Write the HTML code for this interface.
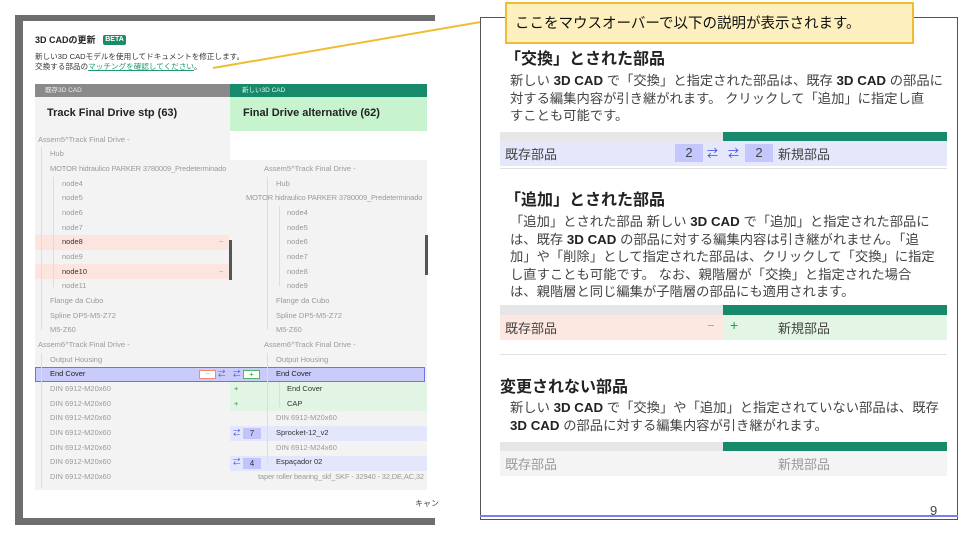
<!DOCTYPE html>
<html><head><meta charset="utf-8"><style>
*{margin:0;padding:0;box-sizing:border-box}
body{width:960px;height:540px;background:#fff;position:relative;overflow:hidden;font-family:"Liberation Sans","Noto Sans CJK JP",sans-serif;color:#222}
.a{position:absolute}
.row{position:absolute;height:14.7px;font-size:7.5px;color:#9a9a9a;line-height:14.7px;white-space:nowrap}
.h{font-size:16px;font-weight:bold;color:#222}
.p{font-size:13.3px;color:#444;line-height:17.6px}
.p b{color:#222}
.lbl{position:absolute;font-size:13px;color:#444}
.clip{position:absolute;overflow:hidden}
</style></head><body>
<div class="a" style="left:15px;top:15px;width:420px;height:510px;background:#6e6e6e"></div>
<div class="a" style="left:23px;top:21px;width:412px;height:497px;background:#fff"></div>
<div class="a" style="left:35px;top:33px;font-size:9px;font-weight:bold;color:#222">3D CADの更新</div>
<div class="a" style="left:103px;top:35px;width:23px;height:10px;background:#1f8a66;border-radius:2px;color:#fff;font-size:7px;font-weight:bold;text-align:center;line-height:10px">BETA</div>
<div class="a" style="left:35px;top:52px;font-size:7.6px;color:#333;line-height:10px;white-space:nowrap">新しい3D CADモデルを使用してドキュメントを修正します。<br>交換する部品の<span style="color:#1f9a70;text-decoration:underline">マッチングを確認してください</span>。</div>
<div class="a" style="left:35px;top:84px;width:195px;height:13px;background:#8a8a8a;color:#eee;font-size:6.5px;line-height:13px;padding-left:10px">既存3D CAD</div>
<div class="a" style="left:230px;top:84px;width:197px;height:13px;background:#168a6a;color:#e8f5ef;font-size:6.5px;line-height:13px;padding-left:12px">新しい3D CAD</div>
<div class="a" style="left:35px;top:97px;width:195px;height:393px;background:#f3f3f3"></div>
<div class="a" style="left:230px;top:97px;width:197px;height:34px;background:#c8f3cf"></div>
<div class="a" style="left:230px;top:160px;width:197px;height:330px;background:#f3f3f3"></div>
<div class="a" style="left:47px;top:107px;font-size:11px;font-weight:bold;color:#222">Track Final Drive stp (63)</div>
<div class="a" style="left:243px;top:107px;font-size:11px;font-weight:bold;color:#222">Final Drive alternative (62)</div>
<div class="a" style="left:35px;top:235px;width:194px;height:14.7px;background:#fde5df"></div>
<div class="a" style="left:35px;top:264px;width:194px;height:14.7px;background:#fde5df"></div>
<div class="a" style="left:35px;top:367px;width:390px;height:15px;background:#c9ccfb;border:1px solid #6f72ea"></div>
<div class="a" style="left:230px;top:382px;width:197px;height:29px;background:#e2f5e4"></div>
<div class="a" style="left:230px;top:426px;width:197px;height:14.7px;background:#e4e6fb"></div>
<div class="a" style="left:230px;top:456px;width:197px;height:14.7px;background:#e4e6fb"></div>
<div class="a" style="left:41px;top:147px;width:1px;height:183px;background:#ddd"></div>
<div class="a" style="left:53px;top:177px;width:1px;height:110px;background:#ddd"></div>
<div class="a" style="left:41px;top:353px;width:1px;height:135px;background:#ddd"></div>
<div class="a" style="left:267px;top:177px;width:1px;height:153px;background:#ddd"></div>
<div class="a" style="left:279px;top:206px;width:1px;height:80px;background:#ddd"></div>
<div class="a" style="left:267px;top:353px;width:1px;height:110px;background:#ddd"></div>
<div class="a" style="left:279px;top:382px;width:1px;height:25px;background:#ddd"></div>
<div class="clip" style="left:35px;top:97px;width:194px;height:393px">
<div style="position:relative;left:-35px;top:-97px">
<div class="row" style="left:38px;top:133px">Assem5^Track Final Drive -</div>
<div class="row" style="left:50px;top:147px">Hub</div>
<div class="row" style="left:50px;top:162px;letter-spacing:-0.15px">MOTOR hidraulico PARKER 3780009_Predeterminado</div>
<div class="row" style="left:62px;top:177px">node4</div>
<div class="row" style="left:62px;top:191px">node5</div>
<div class="row" style="left:62px;top:206px">node6</div>
<div class="row" style="left:62px;top:221px">node7</div>
<div class="row" style="left:62px;top:235px;color:#333">node8</div>
<div class="row" style="left:62px;top:250px">node9</div>
<div class="row" style="left:62px;top:265px;color:#333">node10</div>
<div class="row" style="left:62px;top:279px">node11</div>
<div class="row" style="left:50px;top:294px">Flange da Cubo</div>
<div class="row" style="left:50px;top:309px">Spline DP5-M5-Z72</div>
<div class="row" style="left:50px;top:323px">M5-Z60</div>
<div class="row" style="left:38px;top:338px">Assem6^Track Final Drive -</div>
<div class="row" style="left:50px;top:353px">Output Housing</div>
<div class="row" style="left:50px;top:367px;color:#222">End Cover</div>
<div class="row" style="left:50px;top:382px">DIN 6912-M20x60</div>
<div class="row" style="left:50px;top:397px">DIN 6912-M20x60</div>
<div class="row" style="left:50px;top:411px">DIN 6912-M20x60</div>
<div class="row" style="left:50px;top:426px">DIN 6912-M20x60</div>
<div class="row" style="left:50px;top:441px">DIN 6912-M20x60</div>
<div class="row" style="left:50px;top:455px">DIN 6912-M20x60</div>
<div class="row" style="left:50px;top:470px">DIN 6912-M20x60</div>
<div class="row" style="left:219px;top:235px;color:#f08a70">−</div>
<div class="row" style="left:219px;top:265px;color:#f08a70">−</div>
</div></div>
<div class="a" style="left:229px;top:240px;width:3px;height:40px;background:#555"></div>
<div class="a" style="left:425px;top:235px;width:3px;height:40px;background:#555"></div>
<div class="a" style="left:199px;top:370px;width:17px;height:9px;background:#fff;border:1px solid #f08a70;color:#f08a70;font-size:7px;line-height:7px;text-align:center">−</div>
<div class="row" style="left:218px;top:367px;color:#3b4be8">⇄</div>
<div class="clip" style="left:230px;top:97px;width:195px;height:393px">
<div style="position:relative;left:-230px;top:-97px">
<div class="row" style="left:264px;top:162px">Assem5^Track Final Drive -</div>
<div class="row" style="left:276px;top:177px">Hub</div>
<div class="row" style="left:246px;top:191px;letter-spacing:-0.15px">MOTOR hidraulico PARKER 3780009_Predeterminado</div>
<div class="row" style="left:287px;top:206px">node4</div>
<div class="row" style="left:287px;top:221px">node5</div>
<div class="row" style="left:287px;top:235px">node6</div>
<div class="row" style="left:287px;top:250px">node7</div>
<div class="row" style="left:287px;top:265px">node8</div>
<div class="row" style="left:287px;top:279px">node9</div>
<div class="row" style="left:276px;top:294px">Flange da Cubo</div>
<div class="row" style="left:276px;top:309px">Spline DP5-M5-Z72</div>
<div class="row" style="left:276px;top:323px">M5-Z60</div>
<div class="row" style="left:264px;top:338px">Assem6^Track Final Drive -</div>
<div class="row" style="left:276px;top:353px">Output Housing</div>
<div class="row" style="left:276px;top:367px;color:#222">End Cover</div>
<div class="row" style="left:234px;top:382px;color:#2a9a3f">+</div>
<div class="row" style="left:287px;top:382px;color:#333">End Cover</div>
<div class="row" style="left:234px;top:397px;color:#2a9a3f">+</div>
<div class="row" style="left:287px;top:397px;color:#333">CAP</div>
<div class="row" style="left:276px;top:411px">DIN 6912-M20x60</div>
<div class="row" style="left:233px;top:426px;color:#3b4be8">⇄</div>
<div class="a" style="left:243px;top:428px;width:18px;height:11px;background:#c0c4fa;color:#333;font-size:8px;line-height:11px;text-align:center">7</div>
<div class="row" style="left:276px;top:426px;color:#333">Sprocket-12_v2</div>
<div class="row" style="left:276px;top:441px">DIN 6912-M24x60</div>
<div class="row" style="left:233px;top:455px;color:#3b4be8">⇄</div>
<div class="a" style="left:243px;top:458px;width:18px;height:11px;background:#c0c4fa;color:#333;font-size:8px;line-height:11px;text-align:center">4</div>
<div class="row" style="left:276px;top:455px;color:#333">Espaçador 02</div>
<div class="row" style="left:258px;top:470px;letter-spacing:-0.15px">taper roller bearing_skf_SKF - 32940 - 32,DE,AC,32</div>
</div></div>
<div class="row" style="left:233px;top:367px;color:#3b4be8">⇄</div>
<div class="a" style="left:243px;top:370px;width:17px;height:9px;background:#fff;border:1px solid #4cb560;color:#2a9a3f;font-size:8px;line-height:7px;text-align:center">+</div>
<div class="a" style="left:23px;top:490px;width:412px;height:28px;background:#fff"></div>
<div class="a" style="left:415px;top:498px;font-size:8px;color:#444">キャン</div>
<svg class="a" style="left:0;top:0" width="960" height="540"><line x1="213" y1="68" x2="510" y2="17" stroke="#f0bc30" stroke-width="2"/></svg>
<div class="a" style="left:480px;top:17px;width:478px;height:503px;border:1px solid #555;background:#fff"></div>
<div class="a" style="left:480px;top:515px;width:478px;height:2px;background:#7a7ef0"></div>
<div class="a" style="left:505px;top:2px;width:409px;height:42px;background:#fdefbe;border:2px solid #f0bc30;font-size:14.5px;color:#111;padding:8px 0 0 8px">ここをマウスオーバーで以下の説明が表示されます。</div>
<div class="a h" style="left:505px;top:45px">「交換」とされた部品</div>
<div class="a p" style="left:510px;top:72px">新しい <b>3D CAD</b> で「交換」と指定された部品は、既存 <b>3D CAD</b> の部品に<br>対する編集内容が引き継がれます。 クリックして「追加」に指定し直<br>すことも可能です。</div>
<div class="a" style="left:500px;top:132px;width:223px;height:9px;background:#e6e6e6"></div>
<div class="a" style="left:723px;top:132px;width:224px;height:9px;background:#168a6a"></div>
<div class="a" style="left:500px;top:141px;width:447px;height:25px;background:#e5e7fb"></div>
<div class="lbl" style="left:505px;top:144px">既存部品</div>
<div class="a" style="left:675px;top:144px;width:28px;height:18px;background:#c4c7fb;text-align:center;font-size:13px;color:#444;line-height:18px">2</div>
<div class="a" style="left:707px;top:145px;font-size:11px;color:#3b4be8">⇄</div>
<div class="a" style="left:728px;top:145px;font-size:11px;color:#3b4be8">⇄</div>
<div class="a" style="left:745px;top:144px;width:28px;height:18px;background:#c4c7fb;text-align:center;font-size:13px;color:#444;line-height:18px">2</div>
<div class="lbl" style="left:778px;top:144px">新規部品</div>
<div class="a" style="left:500px;top:168px;width:447px;height:1px;background:#e0e0e0"></div>
<div class="a h" style="left:505px;top:186px">「追加」とされた部品</div>
<div class="a p" style="left:510px;top:213px">「追加」とされた部品 新しい <b>3D CAD</b> で「追加」と指定された部品に<br>は、既存 <b>3D CAD</b> の部品に対する編集内容は引き継がれません。「追<br>加」や「削除」として指定された部品は、クリックして「交換」に指定<br>し直すことも可能です。 なお、親階層が「交換」と指定された場合<br>は、親階層と同じ編集が子階層の部品にも適用されます。</div>
<div class="a" style="left:500px;top:305px;width:223px;height:10px;background:#e6e6e6"></div>
<div class="a" style="left:723px;top:305px;width:224px;height:10px;background:#168a6a"></div>
<div class="a" style="left:500px;top:315px;width:223px;height:25px;background:#fde7e1"></div>
<div class="a" style="left:723px;top:315px;width:224px;height:25px;background:#e3f5e5"></div>
<div class="lbl" style="left:505px;top:318px">既存部品</div>
<div class="a" style="left:707px;top:318px;font-size:13px;color:#f08a70">−</div>
<div class="a" style="left:730px;top:317px;font-size:14px;color:#2a9a3f">+</div>
<div class="lbl" style="left:778px;top:318px">新規部品</div>
<div class="a" style="left:500px;top:354px;width:447px;height:1px;background:#e0e0e0"></div>
<div class="a h" style="left:500px;top:373px">変更されない部品</div>
<div class="a p" style="left:510px;top:399px">新しい <b>3D CAD</b> で「交換」や「追加」と指定されていない部品は、既存<br><b>3D CAD</b> の部品に対する編集内容が引き継がれます。</div>
<div class="a" style="left:500px;top:442px;width:223px;height:9px;background:#e6e6e6"></div>
<div class="a" style="left:723px;top:442px;width:224px;height:9px;background:#168a6a"></div>
<div class="a" style="left:500px;top:451px;width:447px;height:25px;background:#f4f4f4"></div>
<div class="lbl" style="left:505px;top:454px;color:#999">既存部品</div>
<div class="lbl" style="left:778px;top:454px;color:#999">新規部品</div>
<div class="a" style="left:930px;top:503px;font-size:13px;color:#444">9</div>
</body></html>
